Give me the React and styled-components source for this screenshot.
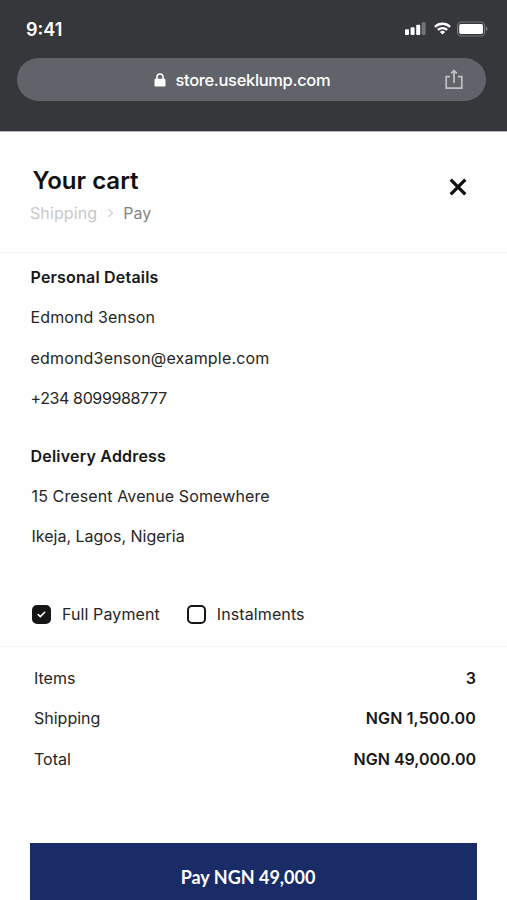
import { useState } from "react";
import styled, { createGlobalStyle } from "styled-components";

const details = [
    { text: "Edmond 3enson", spacing: 0.12 },
    { text: "edmond3enson@example.com", spacing: 0.18 },
    { text: "+234 8099988777", spacing: -0.38 },
]

const address = [
    { text: "15 Cresent Avenue Somewhere", spacing: 0.12, indent: 1 },
    { text: "Ikeja, Lagos, Nigeria", spacing: 0, indent: 1 },
]

const summary = [
    { label: "Items", value: "3", spacing: 0 },
    { label: "Shipping", value: "NGN 1,500.00", spacing: 0.14 },
    { label: "Total", value: "NGN 49,000.00", spacing: 0 },
]

export default function App() {
    const [method, setMethod] = useState("full")

    return <Screen>
        <GlobalStyle />
        <BrowserBar>
            <StatusBar>
                <Time>9:41</Time>
                <StatusIcons />
            </StatusBar>
            <AddressBar>
                <LockIcon />
                <Url>store.useklump.com</Url>
                <ShareIcon />
            </AddressBar>
        </BrowserBar>

        <CartHeader>
            <div>
                <Title>Your cart</Title>
                <Breadcrumb>
                    <Crumb>Shipping</Crumb>
                    <Chevron width="7" height="10" viewBox="0 0 7 10">
                        <path d="M1.5 1l4 4-4 4" fill="none" stroke="#d4d4d4" strokeWidth="1.2" />
                    </Chevron>
                    <Crumb $active>Pay</Crumb>
                </Breadcrumb>
            </div>
            <CloseButton aria-label="Close">
                <svg width="18" height="18" viewBox="0 0 18 18">
                    <path d="M1.7 1.7l14.6 14.6M16.3 1.7L1.7 16.3" stroke="#101010" strokeWidth="3.3" />
                </svg>
            </CloseButton>
        </CartHeader>

        <Details>
            <Heading $spacing={0.2}>Personal Details</Heading>
            {details.map(d => <Line key={d.text} $spacing={d.spacing}>{d.text}</Line>)}
            <Spacer $height={17} />
            <Heading $spacing={0.2}>Delivery Address</Heading>
            {address.map(d => <Line key={d.text} $spacing={d.spacing} $indent={d.indent}>{d.text}</Line>)}
        </Details>

        <Methods>
            <Method onClick={() => setMethod("full")}>
                <Checkbox checked={method === "full"} />
                Full Payment
            </Method>
            <Method onClick={() => setMethod("instalments")}>
                <Checkbox checked={method === "instalments"} />
                Instalments
            </Method>
        </Methods>

        <Summary>
            {summary.map(s => <SummaryRow key={s.label}>
                <Line>{s.label}</Line>
                <Amount $spacing={s.spacing}>{s.value}</Amount>
            </SummaryRow>)}
        </Summary>

        <PayButton>Pay NGN 49,000</PayButton>
    </Screen>
}

function StatusIcons() {
    return <svg width="83" height="18" viewBox="0 0 83 18">
        {/* signal */}
        <rect x="0" y="9.3" width="4" height="5.6" rx="1" fill="#fff" />
        <rect x="5.6" y="7.3" width="4" height="7.6" rx="1" fill="#fff" />
        <rect x="11.2" y="4.8" width="4" height="10.1" rx="1" fill="#fff" />
        <rect x="16.6" y="2.3" width="4" height="12.6" rx="1" fill="#727376" />
        {/* wifi */}
        <g transform="translate(29 2)" fill="none" stroke="#fff" strokeWidth="2.3">
            <path d="M.9 4.8a11 11 0 0 1 15.2 0" />
            <path d="M3.8 7.9a6.9 6.9 0 0 1 9.4 0" />
            <path d="M8.5 12.5L5.9 9.9a3.8 3.8 0 0 1 5.2 0z" fill="#fff" stroke="none" />
        </g>
        {/* battery */}
        <rect x="52.6" y="2" width="27" height="14" rx="3.8" fill="none" stroke="#77787b" strokeWidth="1.2" />
        <rect x="54.2" y="3.9" width="23.8" height="10.2" rx="1.8" fill="#fff" />
        <path d="M81 6.6c2 .8 2 3.8 0 4.6z" fill="#77787b" />
    </svg>
}

function LockIcon() {
    return <svg width="12" height="14" viewBox="0 0 12 14">
        <rect x=".5" y="5.7" width="11" height="7.8" rx="1.2" fill="#fff" />
        <path d="M3 6.5V4a3 3 0 0 1 6 0v2.5" fill="none" stroke="#fff" strokeWidth="1.6" />
    </svg>
}

function ShareIcon() {
    return <Share width="18" height="21" viewBox="0 0 18 21" fill="none" stroke="#c0c1c4" strokeWidth="1.7">
        <path d="M5 7.6H1.2v11.6h15.6V7.6H13" />
        <path d="M9 14V2M6.2 4.4L9 1.4l2.8 3" />
    </Share>
}

function Checkbox({ checked }) {
    return <Box $checked={checked} role="checkbox" aria-checked={checked}>
        {checked && <svg width="9" height="7" viewBox="0 0 9 7">
            <path d="M1.2 3.6l2.1 2L7.7 1.3" fill="none" stroke="#fff" strokeWidth="1.6" strokeLinecap="round" />
        </svg>}
    </Box>
}

const GlobalStyle = createGlobalStyle`
    * {
        box-sizing: border-box;
    }

    body {
        margin: 0;
        background-color: #fff;
    }

    button {
        font: inherit;
        border: none;
        padding: 0;
        background: none;
        cursor: pointer;
    }
`

const Screen = styled.main`
    display: flex;
    flex-direction: column;
    height: 900px;
    overflow: hidden;
    background-color: #fefefe;
    color: #262626;
    font-family: Inter, "Liberation Sans", sans-serif;
    font-size: 16px;
`

const BrowserBar = styled.div`
    flex: none;
    height: 132px;
    padding: 0 21px 0 17px;
    background-color: #36373b;
    border-bottom: 1px solid #b4b4b6;
`

const StatusBar = styled.div`
    display: flex;
    justify-content: space-between;
    align-items: center;
    height: 58px;
    padding: 0 0 0 9px;
    margin-right: -2px;
`

const Time = styled.span`
    color: #fff;
    font-size: 18px;
    font-weight: 600;
    letter-spacing: 0;
`

const AddressBar = styled.div`
    display: flex;
    align-items: center;
    height: 43px;
    padding: 0 23px 0 137px;
    border-radius: 22px;
    background-color: #606369;
`

const Url = styled.span`
    flex: 1;
    margin-left: 9.5px;
    color: #fff;
    font-size: 16.5px;
    font-weight: 500;
    letter-spacing: -0.34px;
    white-space: nowrap;
`

const Share = styled.svg`
    flex: none;
`

const CartHeader = styled.header`
    flex: none;
    display: flex;
    justify-content: space-between;
    height: 121px;
    padding: 34px 40px 0 30px;
    border-bottom: 1px solid #f3f3f3;
`

const Title = styled.h1`
    margin: 0 0 0 2.5px;
    color: #101010;
    font-size: 24px;
    font-weight: 600;
    line-height: 30px;
    letter-spacing: 0;
`

const Breadcrumb = styled.nav`
    display: flex;
    align-items: center;
    height: 33px;
`

const Crumb = styled.span`
    color: ${(p) => p.$active ? "#858585" : "#c9c9c9"};
    letter-spacing: 0.1px;
`

const Chevron = styled.svg`
    margin: 0 9px 0 10px;
`

const CloseButton = styled.button`
    align-self: flex-start;
    width: 18px;
    height: 18px;
    margin-top: 12px;
    svg {
        display: block;
    }
`

const Details = styled.section`
    flex: none;
    height: 330px;
    padding: 4px 30px 0 30.5px;
`

const Heading = styled.h2`
    margin: 0;
    color: #171717;
    font-size: 16px;
    font-weight: 600;
    line-height: 40.4px;
    letter-spacing: ${(p) => p.$spacing ?? 0}px;
`

const Line = styled.p`
    margin: 0 0 0 ${(p) => p.$indent ?? 0}px;
    line-height: 40.4px;
    letter-spacing: ${(p) => p.$spacing ?? 0}px;
`

const Spacer = styled.div`
    height: ${(p) => p.$height}px;
`

const Methods = styled.section`
    flex: none;
    display: flex;
    align-items: center;
    gap: 27px;
    height: 64px;
    padding: 0 0 1px 32px;
    border-bottom: 1px solid #f3f3f3;
`

const Method = styled.button`
    display: flex;
    align-items: center;
    gap: 11px;
    color: #262626;
    letter-spacing: 0.1px;
`

const Box = styled.span`
    display: flex;
    justify-content: center;
    align-items: center;
    width: 19px;
    height: 19px;
    border: 2px solid #161616;
    border-radius: 5px;
    background-color: ${(p) => p.$checked ? "#161616" : "#fff"};
`

const Summary = styled.section`
    flex: none;
    height: 196px;
    padding: 11px 31px 0 34px;
`

const SummaryRow = styled.div`
    display: flex;
    justify-content: space-between;
`

const Amount = styled(Line)`
    color: #171717;
    font-weight: 600;
`

const PayButton = styled.button`
    flex: none;
    height: 69px;
    margin: 0 30px;
    padding: 0 11px 1px 0;
    background-color: #192c67;
    color: #fff;
    font-family: Lato, sans-serif;
    font-size: 18px;
    font-weight: 700;
`
